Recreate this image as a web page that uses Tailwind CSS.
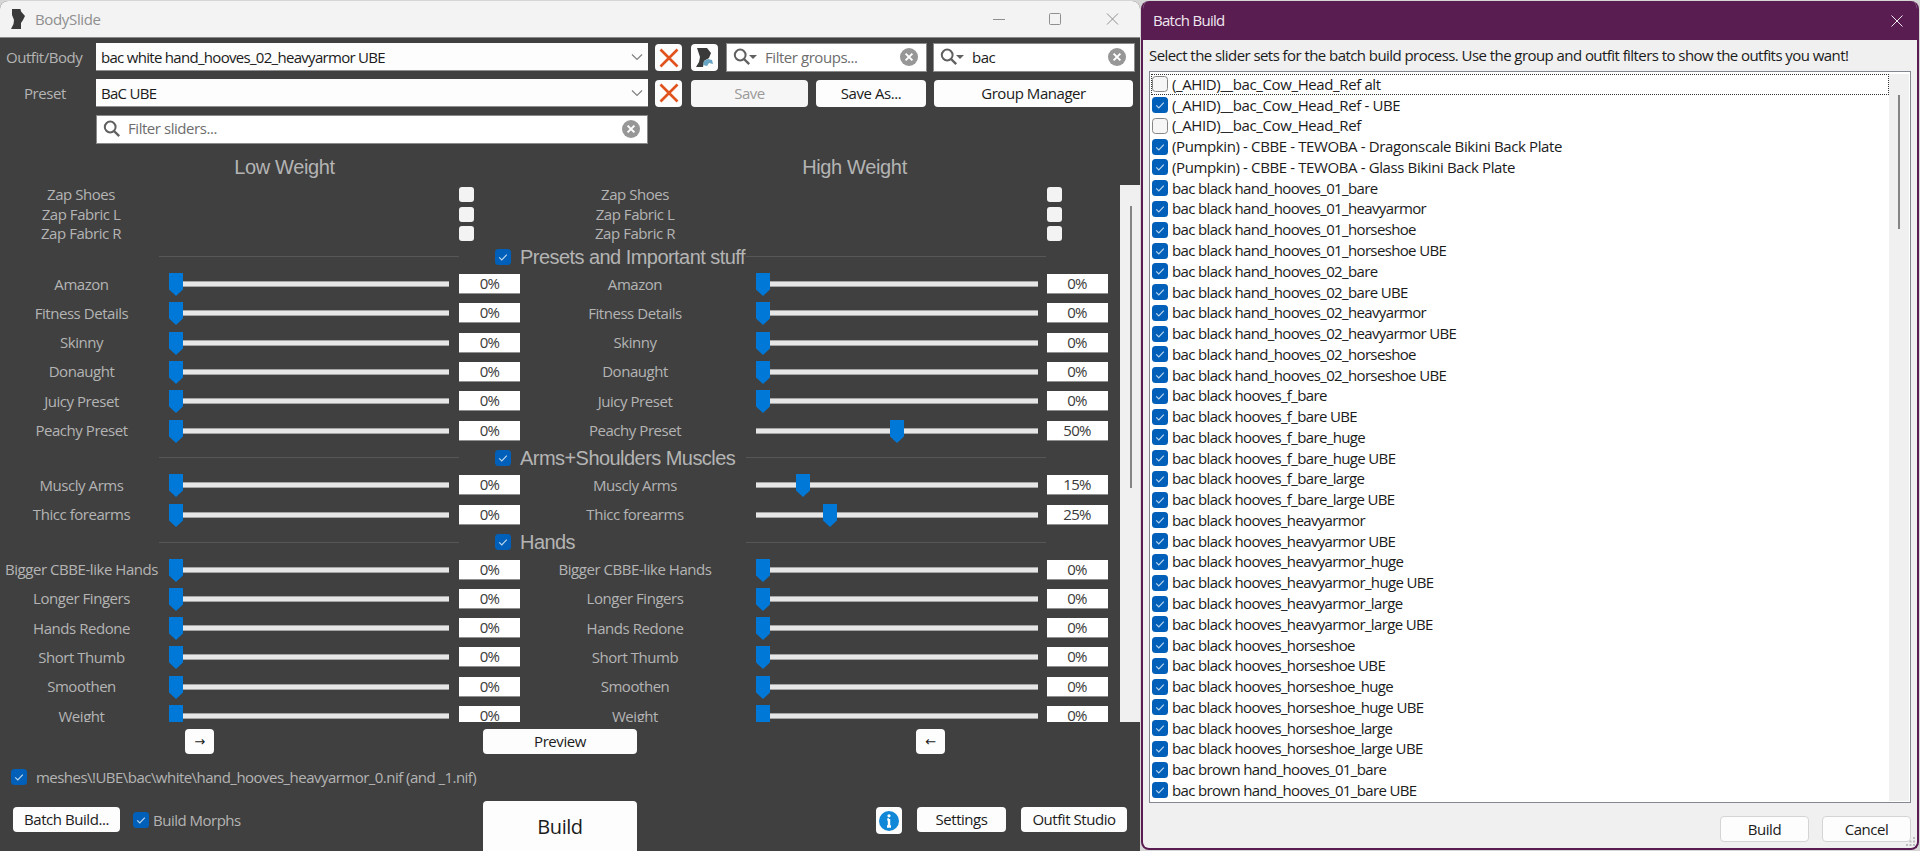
<!DOCTYPE html>
<html lang="en">
<head>
    <meta charset="UTF-8">
    <title>BodySlide</title>
    <script src="https://cdn.jsdelivr.net/npm/@tailwindcss/browser@4"></script>
</head>
<body class="w-[1920px] h-[851px] overflow-hidden bg-[#d6d6d6] font-['Open_Sans','Noto_Sans',sans-serif] text-[15px] tracking-[-0.45px] leading-none">
<!-- Shared icons -->
<svg class="hidden">
    <symbol id="i_check" viewBox="0 0 16 16">
        <rect width="16" height="16" rx="3.5" fill="#005fb8"/>
        <path d="M4.2 8.4 L6.8 11 L11.8 5.6" fill="none" stroke="#b9d5ee" stroke-width="1.2"/>
    </symbol>
    <symbol id="i_cross" viewBox="0 0 20 20">
        <path d="M1.5 1.5 L18.5 18.5 M18.5 1.5 L1.5 18.5" stroke="#e0531f" stroke-width="2.6"/>
    </symbol>
    <symbol id="i_search" viewBox="0 0 18 18">
        <circle cx="7.2" cy="7" r="5.4" fill="none" stroke="#606060" stroke-width="2"/>
        <path d="M11 11 L16.2 16.2" stroke="#606060" stroke-width="2.4"/>
    </symbol>
    <symbol id="i_clear" viewBox="0 0 18 18">
        <circle cx="9" cy="9" r="9" fill="#979797"/>
        <path d="M5.6 5.6 L12.4 12.4 M12.4 5.6 L5.6 12.4" stroke="#fff" stroke-width="2"/>
    </symbol>
    <symbol id="i_down" viewBox="0 0 12 8">
        <path d="M1 1.5 L6 6.5 L11 1.5" fill="none" stroke="#808080" stroke-width="1.2"/>
    </symbol>
</svg>

<main class="flex h-full pt-px">
    <!-- BodySlide window -->
    <section class="w-[1140px] h-full flex flex-col bg-[#404040] text-[#b4b4b4] rounded-t-lg overflow-hidden shrink-0">
        <header class="h-[37px] shrink-0 bg-[#f3f3f3] flex items-center pl-[10px] border-b border-[#8a8a8a] text-[#8f8f8f]">
            <svg class="w-[16px] h-[20px]" viewBox="0 0 16 20"><path d="M2 0 H10.500 L11 2.500 L15 7 L13 11 L11 14 L11 20 H1 L3.500 15 L4 11 L2 6 Z" fill="#3a3a3a"/></svg>
            <span class="ml-[9px] flex-1 tracking-[-0.35px]">BodySlide</span>
            <svg class="w-[126px] h-3 mr-[21px]" viewBox="0 0 126 12" fill="none" stroke="#8f8f8f">
                <path d="M0 6.5 H12"/>
                <rect x="56.5" y=".5" width="11" height="11" rx="1"/>
                <path d="M114 .5 L125 11.5 M125 .5 L114 11.5"/>
            </svg>
        </header>

        <!-- Outfit, preset and filters -->
        <div class="shrink-0 h-[107px] pt-[5px] grid grid-cols-[96px_552px_492px] grid-rows-[28px_28px_29px] gap-y-[8px] items-center">
            <label class="pl-[6px] pt-px">Outfit/Body</label>
            <div class="h-7 bg-[#fdfdfd] text-[#1b1b1b] flex items-center justify-between pt-px pl-[5px] pr-[5px] border-b border-[#909090]">
                <span class="tracking-[-0.7px]">bac white hand_hooves_02_heavyarmor UBE</span>
                <svg class="w-3 h-2"><use href="#i_down"/></svg>
            </div>
            <div class="flex items-center pl-[7px]">
                <button class="w-[27px] h-[27px] mt-px rounded bg-[#fdfdfd] flex items-center justify-center"><svg class="w-5 h-5"><use href="#i_cross"/></svg></button>
                <button class="w-[27px] h-[27px] mt-px ml-[9px] rounded bg-[#fdfdfd] flex items-center justify-center">
                    <svg class="w-[19px] h-5" viewBox="0 0 19 20"><path d="M2 0 H12 L16 5 L14 10 L9 13 L8 19 H1 L4 14 L5 9 Z" fill="#3a3a3a"/><path d="M8 17 L9 13 L13 11 L17 12 L18 16 L14 15 L12 18 Z" fill="#68a5c4"/></svg>
                </button>
                <div class="w-[201px] h-[29px] ml-[8px] bg-white border border-[#8a8a8a] flex items-center pl-[6px] pr-2 text-[#6d6d6d]">
                    <svg class="w-[18px] h-[18px]"><use href="#i_search"/></svg>
                    <i class="border-x-4 border-x-transparent border-t-4 border-t-[#606060] -ml-0.5"></i>
                    <span class="ml-[8px] flex-1">Filter groups...</span>
                    <svg class="w-[18px] h-[18px]"><use href="#i_clear"/></svg>
                </div>
                <div class="w-[202px] h-[29px] ml-[6px] bg-white border border-[#8a8a8a] flex items-center pl-[6px] pr-2 text-[#1b1b1b]">
                    <svg class="w-[18px] h-[18px]"><use href="#i_search"/></svg>
                    <i class="border-x-4 border-x-transparent border-t-4 border-t-[#606060] -ml-0.5"></i>
                    <span class="ml-[8px] flex-1">bac</span>
                    <svg class="w-[18px] h-[18px]"><use href="#i_clear"/></svg>
                </div>
            </div>

            <label class="pl-[24px]">Preset</label>
            <div class="h-7 bg-[#fdfdfd] text-[#1b1b1b] flex items-center justify-between pt-px pl-[5px] pr-[5px] border-b border-[#909090]">
                <span class="tracking-[-0.7px]">BaC UBE</span>
                <svg class="w-3 h-2"><use href="#i_down"/></svg>
            </div>
            <div class="flex items-center pl-[7px] text-[#1b1b1b]">
                <button class="w-[27px] h-[27px] rounded bg-[#fdfdfd] flex items-center justify-center"><svg class="w-5 h-5"><use href="#i_cross"/></svg></button>
                <button class="w-[117px] h-[27px] ml-[9px] rounded bg-[#f6f6f6] text-[#9a9a9a]">Save</button>
                <button class="w-[110px] h-[27px] ml-[8px] rounded bg-[#fdfdfd]">Save As...</button>
                <button class="w-[199px] h-[27px] ml-[8px] rounded bg-[#fdfdfd]">Group Manager</button>
            </div>

            <div class="col-start-2 h-[29px] -mt-px bg-white border border-[#8a8a8a] flex items-center pl-[6px] pr-[7px] pb-px text-[#6d6d6d]">
                <svg class="w-[18px] h-[18px]"><use href="#i_search"/></svg>
                <span class="ml-[7px] flex-1">Filter sliders...</span>
                <svg class="w-[18px] h-[18px]"><use href="#i_clear"/></svg>
            </div>
        </div>

        <div class="h-[40px] shrink-0 flex pt-[12px] text-[20px] tracking-[-0.35px] font-['Liberation_Sans',sans-serif]">
            <h2 class="w-[569px] text-center">Low Weight</h2>
            <h2 class="w-[571px] text-center">High Weight</h2>
        </div>

        <!-- Slider list -->
        <div class="h-[537px] shrink-0 flex overflow-hidden">
            <div id="sliders" class="w-[1120px] shrink-0"></div>
            <div class="w-5 bg-[#f0f0f0] pt-[21px] pl-[10px]"><div class="w-[2px] h-[282px] bg-[#858585]"></div></div>
        </div>

        <div class="shrink-0 h-[32px] pt-[7px] flex text-[#1b1b1b]">
            <button class="ml-[185px] w-[29px] h-[25px] rounded bg-[#fdfdfd] text-[13px] font-['DejaVu_Sans',sans-serif]">→</button>
            <button class="ml-[269px] w-[154px] h-[25px] rounded bg-[#fdfdfd]">Preview</button>
            <button class="ml-[279px] w-[29px] h-[25px] rounded bg-[#fdfdfd] text-[13px] font-['DejaVu_Sans',sans-serif]">←</button>
        </div>

        <div class="shrink-0 h-[47px] flex items-center pl-[11px] pb-px">
            <svg class="w-4 h-4"><use href="#i_check"/></svg>
            <span class="ml-[9px] tracking-[-0.53px]">meshes\!UBE\bac\white\hand_hooves_heavyarmor_0.nif (and _1.nif)</span>
        </div>

        <footer class="flex-1 flex items-start text-[#1b1b1b]">
            <button class="mt-[6px] ml-[13px] w-[107px] h-[25px] rounded bg-[#fdfdfd]">Batch Build...</button>
            <svg class="mt-[11px] ml-[13px] w-4 h-4"><use href="#i_check"/></svg>
            <span class="mt-[12px] ml-[4px] w-[330px] text-[#b4b4b4] tracking-[-0.5px]">Build Morphs</span>
            <button class="w-[154px] h-[54px] rounded bg-[#fdfdfd] text-[20px] pb-[2px]">Build</button>
            <button class="mt-[6px] ml-[239px] w-[26px] h-[27px] rounded bg-[#fdfdfd] flex items-center justify-center">
                <svg class="w-5 h-5" viewBox="0 0 20 20"><circle cx="10" cy="10" r="10" fill="#1187d8"/><path d="M10 8 V16 M8.300 8.500 H10 M8 15.500 H12" stroke="#fff" stroke-width="2.4"/><circle cx="10" cy="4.800" r="1.6" fill="#fff"/></svg>
            </button>
            <button class="mt-[6px] ml-[15px] w-[89px] h-[25px] rounded bg-[#fdfdfd]">Settings</button>
            <button class="mt-[6px] ml-[15px] w-[106px] h-[25px] rounded bg-[#fdfdfd]">Outfit Studio</button>
        </footer>
    </section>

    <!-- Batch Build dialog -->
    <section class="ml-px w-[778px] h-[849px] flex flex-col bg-[#f0f0f0] border-2 border-t-0 border-[#5a1d52] rounded-lg overflow-hidden text-[#1b1b1b]">
        <header class="h-[39px] shrink-0 bg-[#5a1d52] text-[#f0e8ef] flex items-center justify-between pl-[10px] pr-[14px]">
            <span class="tracking-[-0.7px]">Batch Build</span>
            <svg class="w-3 h-3" viewBox="0 0 12 12" stroke="#f0e8ef"><path d="M.5 .5 L11.5 11.5 M11.5 .5 L.5 11.5"/></svg>
        </header>
        <p class="h-[31px] shrink-0 pl-[6px] pt-[8px] whitespace-nowrap tracking-[-0.56px]">Select the slider sets for the batch build process. Use the group and outfit filters to show the outfits you want!</p>
        <div class="mx-[6px] h-[732px] shrink-0 bg-white border border-[#828790] flex pt-[2px] pb-px pr-px">
            <ul id="outfits" class="flex-1 pl-px"></ul>
            <div class="w-[20px] bg-[#f0f0f0] pt-[21px] pl-[9px]"><div class="w-[2px] h-[134px] bg-[#858585]"></div></div>
        </div>
        <div class="relative flex-1 flex justify-end gap-[13px] pt-[13px] pr-[6px]">
            <button class="w-[89px] h-[26px] rounded bg-[#fdfdfd] border border-[#d4d4d4]">Build</button>
            <button class="w-[89px] h-[26px] rounded bg-[#fdfdfd] border border-[#d4d4d4]">Cancel</button>
            <svg class="absolute right-[2px] bottom-[2px] w-[9px] h-[9px]" fill="#bdbdbd"><path d="M0 7h2v2H0zM3.500 7h2v2h-2zM7 7h2v2H7zM7 3.500h2v2H7zM7 0h2v2H7zM3.500 3.500h2v2h-2z"/></svg>
        </div>
    </section>
</main>

<script>
    // [name, high weight value]; the low weight side is all zero
    let groups = [
        {title: 'Presets and Important stuff', items: [['Amazon', 0], ['Fitness Details', 0], ['Skinny', 0], ['Donaught', 0], ['Juicy Preset', 0], ['Peachy Preset', 50]]},
        {title: 'Arms+Shoulders Muscles', items: [['Muscly Arms', 15], ['Thicc forearms', 25]]},
        {title: 'Hands', items: [['Bigger CBBE-like Hands', 0], ['Longer Fingers', 0], ['Hands Redone', 0], ['Short Thumb', 0], ['Smoothen', 0], ['Weight', 0]]}
    ];

    // Track, thumb and value box of one slider
    let slider = (value, width) => `
        <div class="relative h-[6px] ${width} bg-[#e6e6e6] border-y border-[#a5a5a5]">
            <div class="absolute top-[-9px] w-[14px]" style="left:${value * 2.68}px">
                <svg class="block w-[14px] h-[23px]" viewBox="0 0 14 23"><path d="M0 0H14V16.500L7 23L0 16.500Z" fill="#0078d7"/></svg>
            </div>
        </div>`;
    let box = (value, width) => `<div class="${width} h-[20px] bg-white text-[#3a3a3a] border-b border-[#909090] flex items-center justify-center tracking-[-0.7px]">${value}%</div>`;

    let rows = '';
    ['Zap Shoes', 'Zap Fabric L', 'Zap Fabric R'].forEach((zap) => {
        rows += `<div class="h-[19.6px] grid grid-cols-[162px_297px_95px_162px_331px_73px] items-center">
                    <span class="text-center">${zap}</span><i></i>
                    <i class="w-[15px] h-[15px] rounded-[3px] bg-[#f3f3f3]"></i>
                    <span class="text-center">${zap}</span><i></i>
                    <i class="w-[15px] h-[15px] rounded-[3px] bg-[#f3f3f3]"></i>
                </div>`;
    });
    groups.forEach((group) => {
        rows += `<div class="h-[25.6px] flex items-center">
                    <div class="ml-[159px] w-[300px] h-px bg-[#575757]"></div>
                    <svg class="ml-[36px] w-[16px] h-[16px]"><use href="#i_check"/></svg>
                    <span class="ml-[9px] w-[226px] whitespace-nowrap text-[20px] tracking-[-0.55px] font-['Liberation_Sans',sans-serif]">${group.title}</span>
                    <div class="w-[300px] h-px bg-[#575757]"></div>
                </div>`;
        group.items.forEach(([name, value]) => {
            rows += `<div class="h-[29.3px] grid grid-cols-[169px_290px_95px_201.5px_291px_73px] items-center">
                        <span class="w-[163px] text-center whitespace-nowrap">${name}</span>${slider(0, 'w-[280px]')}${box(0, 'w-[61px]')}
                        <span class="w-[162px] text-center whitespace-nowrap">${name}</span>${slider(value, 'w-[282px]')}${box(value, 'w-[61px]')}
                    </div>`;
        });
    });
    document.getElementById('sliders').innerHTML = rows;

    // Outfit list
    let outfits = ['(_AHID)__bac_Cow_Head_Ref alt', '(_AHID)__bac_Cow_Head_Ref - UBE', '(_AHID)__bac_Cow_Head_Ref',
        '(Pumpkin) - CBBE - TEWOBA - Dragonscale Bikini Back Plate', '(Pumpkin) - CBBE - TEWOBA - Glass Bikini Back Plate',
        'bac black hand_hooves_01_bare', 'bac black hand_hooves_01_heavyarmor', 'bac black hand_hooves_01_horseshoe',
        'bac black hand_hooves_01_horseshoe UBE', 'bac black hand_hooves_02_bare', 'bac black hand_hooves_02_bare UBE',
        'bac black hand_hooves_02_heavyarmor', 'bac black hand_hooves_02_heavyarmor UBE', 'bac black hand_hooves_02_horseshoe',
        'bac black hand_hooves_02_horseshoe UBE', 'bac black hooves_f_bare', 'bac black hooves_f_bare UBE',
        'bac black hooves_f_bare_huge', 'bac black hooves_f_bare_huge UBE', 'bac black hooves_f_bare_large',
        'bac black hooves_f_bare_large UBE', 'bac black hooves_heavyarmor', 'bac black hooves_heavyarmor UBE',
        'bac black hooves_heavyarmor_huge', 'bac black hooves_heavyarmor_huge UBE', 'bac black hooves_heavyarmor_large',
        'bac black hooves_heavyarmor_large UBE', 'bac black hooves_horseshoe', 'bac black hooves_horseshoe UBE',
        'bac black hooves_horseshoe_huge', 'bac black hooves_horseshoe_huge UBE', 'bac black hooves_horseshoe_large',
        'bac black hooves_horseshoe_large UBE', 'bac brown hand_hooves_01_bare', 'bac brown hand_hooves_01_bare UBE'];
    let list = '';
    outfits.forEach((outfit, i) => {
        let mark = (i == 0 || i == 2)
            ? '<i class="w-4 h-4 rounded-[3.5px] border border-[#868686] bg-[#f6f6f6]"></i>'
            : '<svg class="w-4 h-4"><use href="#i_check"/></svg>';
        let focus = i == 0 ? 'outline-1 outline-dotted outline-[#333] -outline-offset-1' : '';
        let spacing = outfit.startsWith('bac') ? 'tracking-[-0.64px]' : 'tracking-[-0.38px]';
        list += `<li class="h-[20.770px] flex items-center pl-px gap-[4px] whitespace-nowrap ${focus}">${mark}<span class="${spacing}">${outfit}</span></li>`;
    });
    document.getElementById('outfits').innerHTML = list;
</script>
</body>
</html>
